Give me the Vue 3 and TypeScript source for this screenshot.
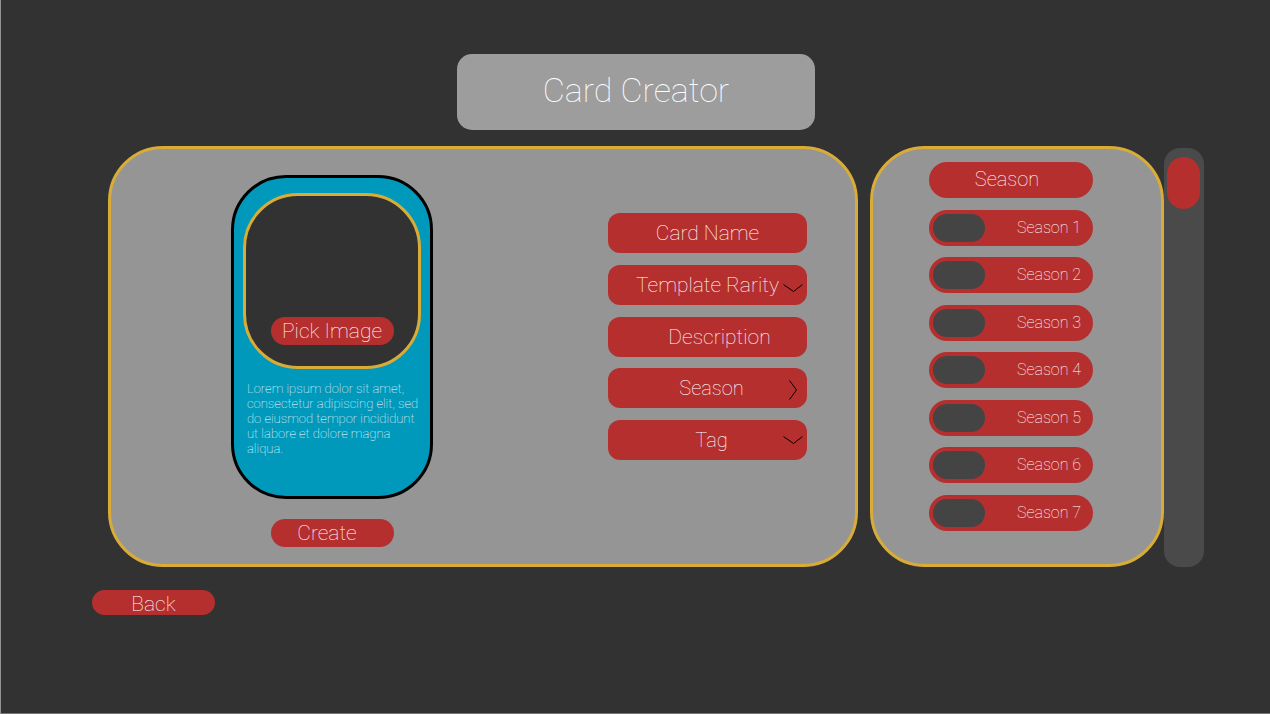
<script setup lang="ts">
import { ref } from 'vue'

interface SeasonItem {
  name: string
  enabled: boolean
}

const cardName = ref('')
const description = ref('')
const rarity = ref('Template Rarity')
const tag = ref('Tag')

const seasons = ref<SeasonItem[]>(
  Array.from({ length: 7 }, (_, i) => ({ name: `Season ${i + 1}`, enabled: false })),
)
</script>

<template>
  <div class="page">
    <header class="title-box">
      <h1>Card Creator</h1>
    </header>

    <main class="workspace">
      <section class="panel editor" aria-label="Card editor">
        <div class="preview">
          <article class="card">
            <div class="card-image">
              <button type="button" class="pill">Pick Image</button>
            </div>
            <p>
              Lorem ipsum dolor sit amet, consectetur adipiscing elit, sed do eiusmod tempor
              incididunt ut labore et dolore magna aliqua.
            </p>
          </article>
          <button type="button" class="pill create">Create</button>
        </div>

        <form class="fields" @submit.prevent>
          <div class="field">
            <input v-model="cardName" type="text" placeholder="Card Name" aria-label="Card Name" />
          </div>
          <div class="field">
            <select v-model="rarity" aria-label="Template Rarity">
              <option>Template Rarity</option>
            </select>
            <svg class="chevron" viewBox="0 0 20 20" aria-hidden="true">
              <path d="M0.5 7.5 L10.5 14.5 L19.5 7.5" />
            </svg>
          </div>
          <div class="field">
            <input
              v-model="description"
              class="indented"
              type="text"
              placeholder="Description"
              aria-label="Description"
            />
          </div>
          <div class="field">
            <button type="button" class="nudged">Season</button>
            <svg class="chevron" viewBox="0 0 20 20" aria-hidden="true">
              <path d="M6.5 0.5 L13.5 10 L6.5 19.5" />
            </svg>
          </div>
          <div class="field">
            <select v-model="tag" class="nudged" aria-label="Tag">
              <option>Tag</option>
            </select>
            <svg class="chevron" viewBox="0 0 20 20" aria-hidden="true">
              <path d="M0.5 4.5 L10.5 11.5 L19.5 4.5" />
            </svg>
          </div>
        </form>
      </section>

      <section class="panel seasons" aria-labelledby="season-heading">
        <div id="season-list" class="season-list">
          <h2 id="season-heading">Season</h2>
          <label v-for="season in seasons" :key="season.name" class="season">
            <input v-model="season.enabled" type="checkbox" />
            <span>{{ season.name }}</span>
          </label>
        </div>
      </section>

      <div class="track" role="scrollbar" aria-label="Seasons" aria-valuenow="0" aria-controls="season-list">
        <div class="thumb"></div>
      </div>
    </main>

    <button type="button" class="pill back">Back</button>
  </div>
</template>

<style>
body {
  margin: 0;
  background: #323232;
}
</style>

<style scoped>
.page {
  box-sizing: border-box;
  min-height: 100vh;
  display: flex;
  flex-direction: column;
  padding: 54px 66px 24px 107px;
  border-left: 1px solid #949494;
  border-bottom: 1px solid #777475;
  background: #323232;
  color: #fff;
  font-family: Roboto, "Open Sans", sans-serif;
  font-weight: 100;
}

.page * {
  box-sizing: border-box;
}

button,
input,
select {
  margin: 0;
  border: 0;
  color: inherit;
  font: inherit;
}

button {
  cursor: pointer;
}

.title-box {
  width: 358px;
  height: 76px;
  margin-left: 349px;
  border-radius: 15px;
  background: #9d9d9d;
  display: flex;
  justify-content: center;
  padding-top: 15px;
}

h1 {
  margin: 0;
  font-size: 34px;
  line-height: 42px;
  font-weight: 100;
}

.workspace {
  display: grid;
  grid-template-columns: 762fr 294fr 40px;
  margin-top: 16px;
}

.panel {
  min-height: 421px;
  border: 3px solid #d9ac38;
  border-radius: 55px;
  background: #959595;
}

.editor {
  display: flex;
  justify-content: space-between;
  margin-right: 12px;
  padding: 26px 48px 16px 120px;
}

.preview {
  display: flex;
  flex-direction: column;
  align-items: center;
}

.card {
  width: 202px;
  min-height: 324px;
  padding: 15px 9px;
  border: 3px solid #000;
  border-radius: 55px;
  background: #0099bc;
}

.card-image {
  width: 178px;
  height: 176px;
  border: 3px solid #d9ac38;
  border-radius: 55px;
  background: #323232;
  display: flex;
  align-items: flex-end;
  justify-content: center;
  padding-bottom: 21px;
}

.card p {
  width: 180px;
  margin: 12px 0 0 4px;
  font-size: 13px;
  line-height: 15px;
}

.pill {
  width: 123px;
  height: 28px;
  padding: 0;
  border-radius: 14px;
  background: #b52f2f;
  font-size: 21px;
  line-height: 28px;
}

.create {
  margin-top: 20px;
  padding-right: 10px;
}

.back {
  height: 25px;
  margin: 23px 0 0 -16px;
  padding-top: 2px;
  line-height: 24px;
}

.fields {
  width: 199px;
  height: 247px;
  margin-top: 38px;
  display: flex;
  flex-direction: column;
  justify-content: space-between;
}

.field {
  position: relative;
}

.field input,
.field select,
.field button {
  display: block;
  width: 100%;
  height: 40px;
  padding: 0;
  border-radius: 12px;
  background: #b52f2f;
  font-size: 21px;
  line-height: 40px;
  text-align: center;
  text-align-last: center;
  appearance: none;
}

.field input::placeholder {
  color: #fff;
  opacity: 1;
}

.field .indented {
  padding-left: 24px;
}

.field .nudged {
  padding-left: 8px;
  font-size: 20px;
}

.chevron {
  position: absolute;
  top: 12px;
  right: 4px;
  width: 20px;
  height: 20px;
  overflow: visible;
  fill: none;
  stroke: #000;
  stroke-width: 1;
  pointer-events: none;
}

.seasons {
  display: flex;
  justify-content: center;
  padding: 13px 12px 13px 0;
}

.season-list {
  width: 164px;
  height: 369px;
  display: flex;
  flex-direction: column;
  justify-content: space-between;
}

h2,
.season {
  height: 36px;
  margin: 0;
  border-radius: 18px;
  background: #b52f2f;
  font-weight: 100;
}

h2 {
  padding-right: 8px;
  font-size: 20px;
  line-height: 35px;
  text-align: center;
}

.season {
  display: flex;
  align-items: center;
  justify-content: space-between;
  padding: 0 12px 0 4px;
  font-size: 16px;
  line-height: 36px;
  cursor: pointer;
}

.season input {
  width: 52px;
  height: 28px;
  border-radius: 14px;
  background: #444;
  appearance: none;
  cursor: pointer;
}

.season input:checked {
  background: #0099bc;
}

.track {
  margin-top: 2px;
  padding: 9px 4px 0 3px;
  border-radius: 16px;
  background: #4a4a4a;
}

.thumb {
  height: 52px;
  border-radius: 17px;
  background: #b52f2f;
}
</style>
